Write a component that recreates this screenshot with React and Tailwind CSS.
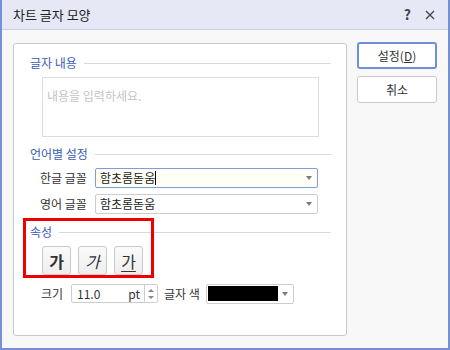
import React from 'react';

const FONT = { fontFamily: '"Noto Sans CJK KR", "Noto Sans", sans-serif' };

const SectionHeader = ({ label, className = '' }) => (
  <div className={`flex items-center h-[16px] ${className}`}>
    <span className="text-[12px] leading-[16px] text-[#3c5db7] pr-[7px]">{label}</span>
    <div className="flex-1 h-px bg-[#d9d9d9]" />
  </div>
);

const Arrow = () => (
  <div className="w-0 h-0 border-x-[3px] border-x-transparent border-t-[4px] border-t-[#7a7a7a]" />
);

const FontSelect = ({ label, value, focused }) => (
  <div className="flex items-center ml-[10px] h-[20px]">
    <span className="w-[55px] text-[12px] text-[#333]">{label}</span>
    <div
      className={`flex items-center w-[223px] h-[20px] rounded-[2px] border pl-[4px] pr-[5px] ${
        focused ? 'border-[#7f9ce0] bg-[#fffff6]' : 'border-[#cdcdcd] bg-white'
      }`}
    >
      <span className="text-[12px] text-[#222] leading-none">{value}</span>
      {focused && <div className="w-px h-[14px] bg-black" />}
      <div className="flex-1" />
      <Arrow />
    </div>
  </div>
);

const StyleBtn = ({ children, className = '' }) => (
  <div className="w-[29px] h-[29px] flex items-center justify-center rounded-[3px] border border-[#c9c9c9] bg-gradient-to-b from-[#fafafa] to-[#eeeeee]">
    <span className={`text-[16px] leading-none text-[#333] ${className}`}>{children}</span>
  </div>
);

export default function App() {
  return (
    <div
      className="w-[450px] h-[350px] flex flex-col border-x-2 border-b-2 border-[#7491d6] bg-[#f8f8f8] relative"
      style={FONT}
    >
      {/* title bar */}
      <div className="h-[30px] flex items-center bg-[#e6e9f5] border-b border-[#c9d0e8] pl-[11px] pr-[10px] shrink-0">
        <span className="text-[13px] text-[#222]">차트 글자 모양</span>
        <div className="flex-1" />
        <span className="text-[14px] text-[#444] font-semibold mr-[14px]">?</span>
        <svg width="10" height="10" viewBox="0 0 10 10" className="mr-[3px]">
          <path d="M1 1 L9 9 M9 1 L1 9" stroke="#444" strokeWidth="1.3" />
        </svg>
      </div>

      {/* body */}
      <div className="flex flex-1 pt-[13px] pl-[11px] pr-[10px]">
        <div className="w-[334px] h-[293px] bg-white border border-[#c8c8c8] rounded-[3px] pt-[11px] pl-[16px] pr-[15px]">
          <SectionHeader label="글자 내용" />
          <div className="mt-[6px] ml-[12px] w-[277px] h-[60px] border border-[#dcdcdc] px-[4px] pt-[4px]">
            <span className="text-[12px] text-[#c4c4c4]">내용을 입력하세요.</span>
          </div>

          <SectionHeader label="언어별 설정" className="mt-[9px]" />
          <div className="mt-[6px]">
            <FontSelect label="한글 글꼴" value="함초롬돋움" focused />
          </div>
          <div className="mt-[6px]">
            <FontSelect label="영어 글꼴" value="함초롬돋움" />
          </div>

          <SectionHeader label="속성" className="mt-[10px]" />
          <div className="mt-[6px] ml-[12px] flex gap-[7px]">
            <StyleBtn className="font-bold">가</StyleBtn>
            <StyleBtn className="italic">가</StyleBtn>
            <StyleBtn className="underline underline-offset-[3px]">가</StyleBtn>
          </div>

          <div className="mt-[9px] ml-[11px] flex items-center h-[19px]">
            <span className="w-[30px] text-[12px] text-[#333]">크기</span>
            <div className="flex h-[19px] w-[87px] border border-[#cdcdcd] rounded-[2px] bg-white">
              <div className="flex-1 flex items-center pl-[5px] pr-[4px] text-[12px] text-[#333]">
                <span>11.0</span>
                <div className="flex-1" />
                <span>pt</span>
              </div>
              <div className="w-[13px] border-l border-[#cdcdcd] flex flex-col items-center justify-center gap-[4px]">
                <div className="w-0 h-0 border-x-[3px] border-x-transparent border-b-[3px] border-b-[#888]" />
                <div className="w-0 h-0 border-x-[3px] border-x-transparent border-t-[3px] border-t-[#888]" />
              </div>
            </div>
            <span className="ml-[6px] w-[42px] text-[12px] text-[#333]">글자 색</span>
            <div className="flex items-center w-[88px] h-[20px] border border-[#cdcdcd] rounded-[2px] bg-white pl-[1px] pr-[5px]">
              <div className="w-[70px] h-[15px] bg-black" />
              <div className="flex-1" />
              <Arrow />
            </div>
          </div>
        </div>

        <div className="ml-[10px] flex flex-col gap-[7px] -mt-px">
          <div className="w-[80px] h-[27px] flex items-center justify-center rounded-[3px] border-2 border-[#6f8fdc] bg-white text-[12px] text-[#333]">
            설정(<span className="underline">D</span>)
          </div>
          <div className="w-[80px] h-[27px] flex items-center justify-center rounded-[3px] border border-[#c9c9c9] bg-white text-[12px] text-[#333]">
            취소
          </div>
        </div>
      </div>

      {/* red annotation overlay */}
      <div className="absolute left-[21px] top-[218px] w-[131px] h-[60px] border-[3px] border-[#ee0000] pointer-events-none" />
    </div>
  );
}
